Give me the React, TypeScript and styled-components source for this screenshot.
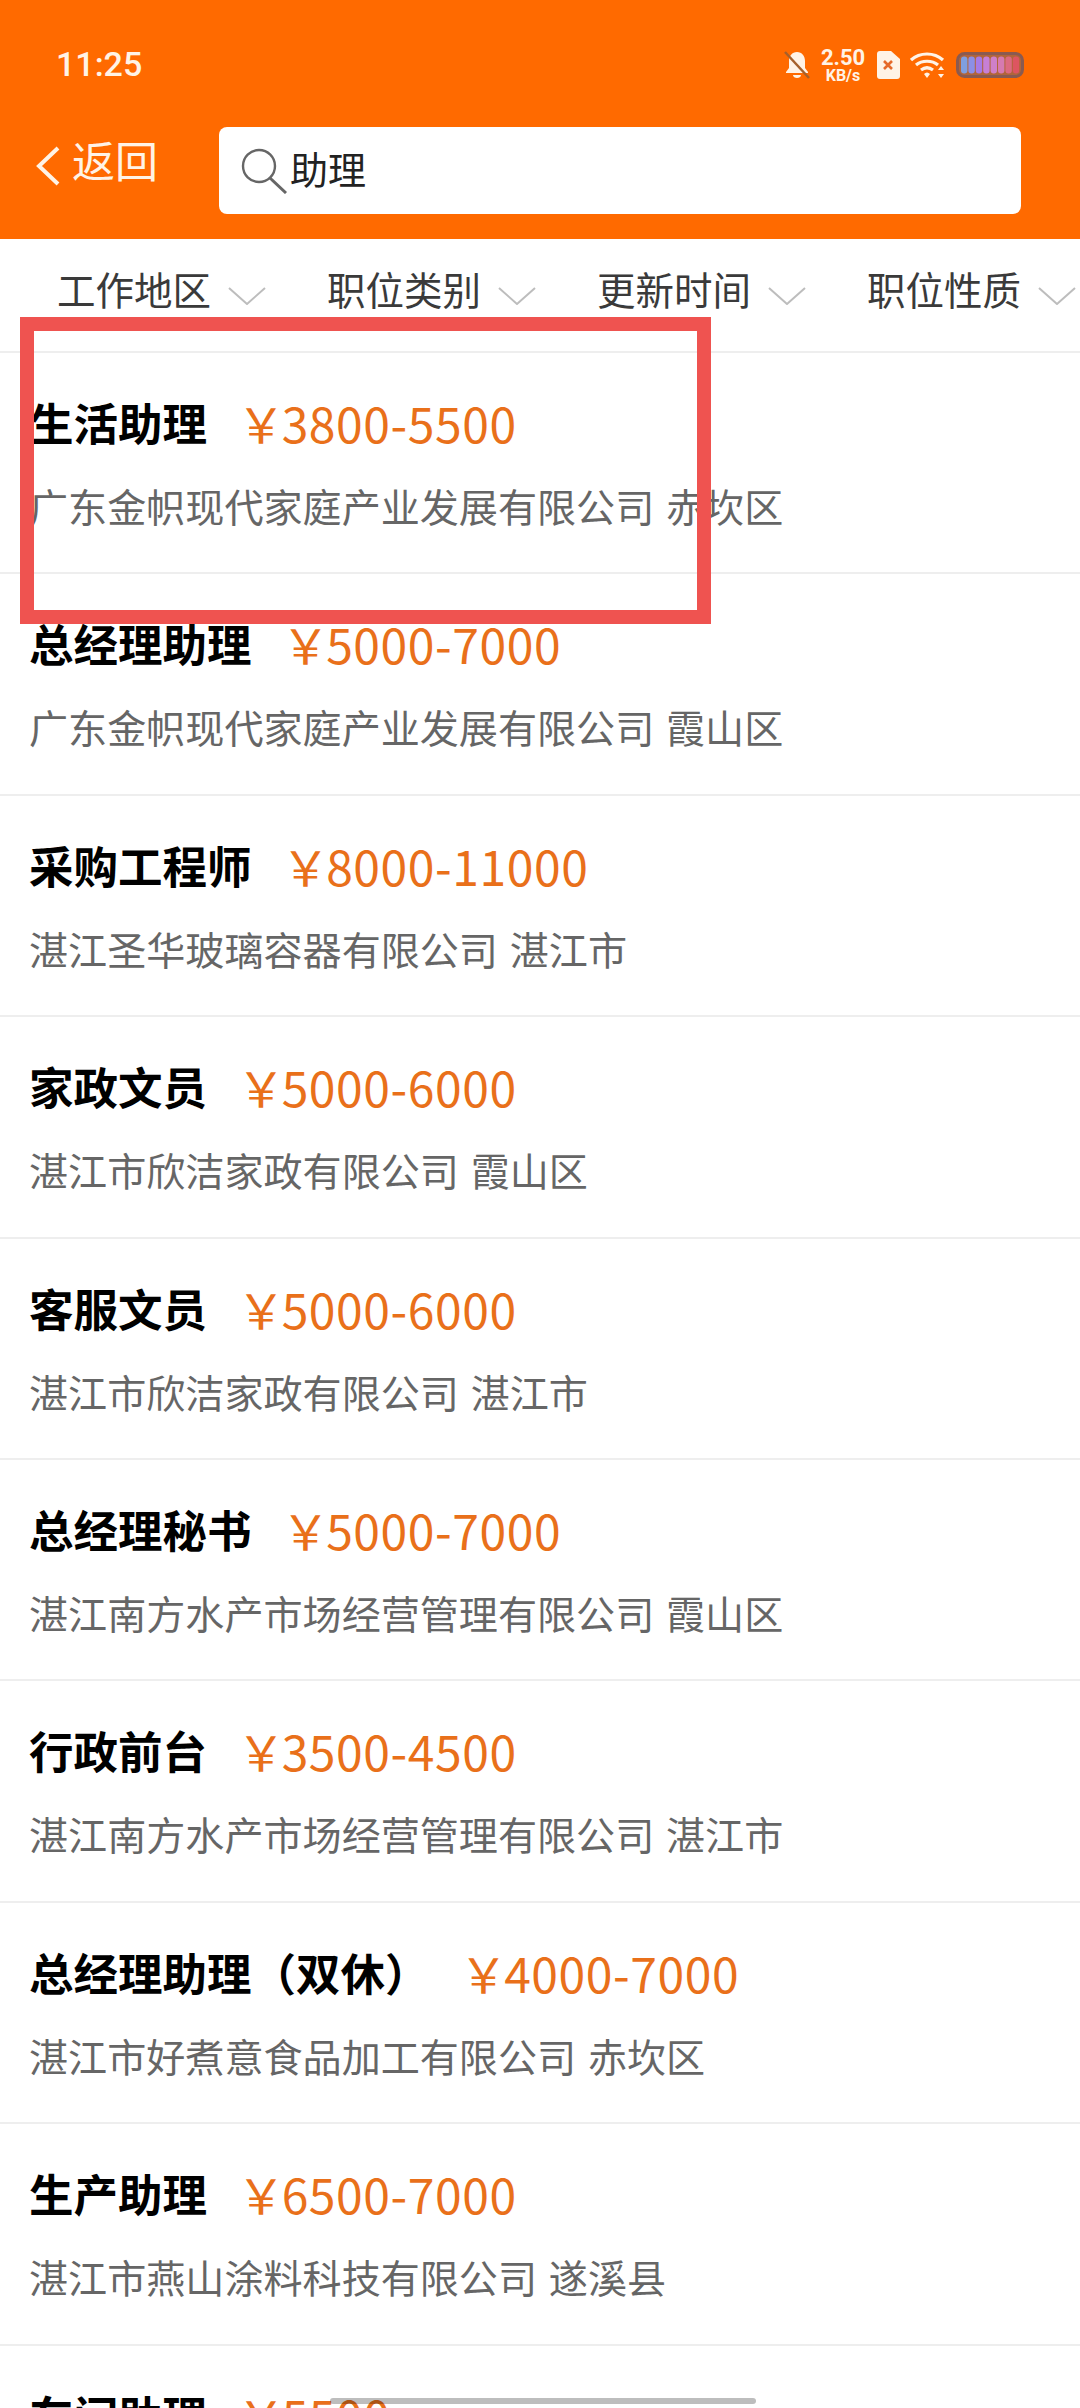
import React from 'react';
import styled, { createGlobalStyle } from 'styled-components';

const GlobalStyle = createGlobalStyle`
  html, body {
    margin: 0;
    padding: 0;
    background: #fff;
  }
  * {
    box-sizing: border-box;
  }
`;

const Page = styled.div`
  position: relative;
  width: 1080px;
  height: 2408px;
  overflow: hidden;
  background: #fff;
  font-family: 'Noto Sans CJK SC', 'Noto Sans', sans-serif;
`;

const Header = styled.header`
  height: 239px;
  background: #ff6a00;
  display: flex;
  flex-direction: column;
`;

const StatusBar = styled.div`
  height: 127px;
  padding: 44px 56px 0 56px;
  display: flex;
  justify-content: space-between;
  align-items: flex-start;
  color: #fff;
`;

const Clock = styled.div`
  font-family: Roboto, sans-serif;
  font-weight: 500;
  font-size: 34px;
  line-height: 40px;
  color: #fff3e6;
`;

const StatusIcons = styled.div`
  display: flex;
  align-items: center;
  gap: 10px;
  height: 36px;
  margin-top: 3px;
`;

const Speed = styled.div`
  display: flex;
  flex-direction: column;
  align-items: center;
  width: 46px;
  font-family: Roboto, sans-serif;
  font-weight: 700;
  color: #fff3e6;
`;

const SpeedValue = styled.span`
  font-size: 22px;
  line-height: 21px;
`;

const SpeedUnit = styled.span`
  font-size: 16px;
  line-height: 15px;
`;

const SearchRow = styled.div`
  display: flex;
  align-items: flex-start;
  padding-left: 36px;
`;

const BackButton = styled.div`
  display: flex;
  align-items: center;
  width: 183px;
  height: 60px;
  margin-top: 2px;
  gap: 12px;
  color: #fff3e6;
  font-size: 43px;
  line-height: 60px;
`;

const BackIcon = styled.svg`
  flex: none;
  margin-top: 14px;
`;

const SearchBox = styled.div`
  width: 802px;
  height: 87px;
  background: #fff;
  border-radius: 8px;
  display: flex;
  align-items: center;
  padding-left: 22px;
`;

const SearchText = styled.span`
  margin: -5px 0 0 1px;
  font-size: 38px;
  line-height: 44px;
  color: #222;
`;

const Filters = styled.div`
  height: 114px;
  border-bottom: 2px solid #eeeeee;
  display: flex;
  padding: 24px 0 0 57px;
  overflow: hidden;
`;

const Filter = styled.div`
  flex: 0 0 270px;
  display: flex;
  align-items: flex-start;
  gap: 17px;
  color: #3a3a3a;
  font-size: 38.5px;
  line-height: 50px;
`;

const Caret = styled.svg`
  flex: none;
  margin-top: 24px;
`;

const List = styled.div`
  display: flex;
  flex-direction: column;
`;

const Row = styled.div`
  height: 221.4px;
  flex: none;
  padding: 38px 0 0 29px;
  border-bottom: 2px solid #eeeeee;
`;

const TitleLine = styled.div`
  display: flex;
  align-items: center;
  height: 62px;
  white-space: nowrap;
`;

const Title = styled.span`
  font-size: 44.5px;
  font-weight: 700;
  line-height: 62px;
  color: #000;
`;

const Price = styled.span`
  margin-left: 30px;
  font-size: 48px;
  line-height: 62px;
  letter-spacing: 0.6px;
  color: #e9701a;
`;

const Yen = styled.span`
  margin-right: -4px;
`;

const Company = styled.div`
  margin-top: 27px;
  font-size: 39.1px;
  line-height: 50px;
  word-spacing: 3px;
  color: #666;
  white-space: nowrap;
`;

const Annotation = styled.div`
  position: absolute;
  left: 20px;
  top: 317px;
  width: 691px;
  height: 307px;
  border-style: solid;
  border-color: #ef5350;
  border-width: 14px;
`;

const Scrollbar = styled.div`
  position: absolute;
  left: 330px;
  top: 2398px;
  width: 426px;
  height: 6px;
  border-radius: 3px;
  background: rgba(0, 0, 0, 0.26);
`;

interface Job {
  title: string;
  salary: string;
  company: string;
  area: string;
}

const filters = ['工作地区', '职位类别', '更新时间', '职位性质'];

const jobs: Job[] = [
  { title: '生活助理', salary: '3800-5500', company: '广东金帜现代家庭产业发展有限公司', area: '赤坎区' },
  { title: '总经理助理', salary: '5000-7000', company: '广东金帜现代家庭产业发展有限公司', area: '霞山区' },
  { title: '采购工程师', salary: '8000-11000', company: '湛江圣华玻璃容器有限公司', area: '湛江市' },
  { title: '家政文员', salary: '5000-6000', company: '湛江市欣洁家政有限公司', area: '霞山区' },
  { title: '客服文员', salary: '5000-6000', company: '湛江市欣洁家政有限公司', area: '湛江市' },
  { title: '总经理秘书', salary: '5000-7000', company: '湛江南方水产市场经营管理有限公司', area: '霞山区' },
  { title: '行政前台', salary: '3500-4500', company: '湛江南方水产市场经营管理有限公司', area: '湛江市' },
  { title: '总经理助理（双休）', salary: '4000-7000', company: '湛江市好煮意食品加工有限公司', area: '赤坎区' },
  { title: '生产助理', salary: '6500-7000', company: '湛江市燕山涂料科技有限公司', area: '遂溪县' },
  { title: '车间助理', salary: '5500', company: '', area: '' },
];

const CaretIcon = () => (
  <Caret width="38" height="18" viewBox="0 0 38 18" fill="none">
    <path d="M1 1l18 16L37 1" stroke="#bdbdbd" strokeWidth="2" />
  </Caret>
);

const BellOff = () => (
  <svg width="26" height="28" viewBox="0 0 26 28">
    <path d="M13 1c-5 0-8 4-8 9v7l-3 4v1h22v-1l-3-4v-7c0-5-3-9-8-9z" fill="#fff3e6" />
    <path d="M9 24h8c0 2-2 3-4 3s-4-1-4-3z" fill="#fff3e6" />
    <path d="M1 1l24 26" stroke="#a5602c" strokeWidth="2.5" />
  </svg>
);

const SimIcon = () => (
  <svg width="24" height="28" viewBox="0 0 24 28">
    <path d="M4 0h11l9 8v17a3 3 0 0 1-3 3H4a3 3 0 0 1-3-3V3a3 3 0 0 1 3-3z" fill="#fff3e6" />
    <path d="M8 10l8 8M16 10l-8 8" stroke="#e5692a" strokeWidth="2.6" />
  </svg>
);

const WifiIcon = () => (
  <svg width="36" height="28" viewBox="0 0 36 28" fill="none">
    <path d="M1 9c9-8 23-8 32 0" stroke="#fff3e6" strokeWidth="3.2" />
    <path d="M6 14c6-5 16-5 22 0" stroke="#fff3e6" strokeWidth="3.2" />
    <path d="M11 19c4-3 8-3 12 0" stroke="#fff3e6" strokeWidth="3.2" />
    <path d="M14 23c2-2 4-2 6 0l-3 4z" fill="#fff3e6" />
    <path d="M31 15l3 4h-6zM31 27l-3-4h6z" fill="#fff3e6" />
  </svg>
);

const batteryCells = ['#7f9fe0', '#8c8fe6', '#a77be6', '#c77fd6', '#cf80c8', '#d67ab0', '#dc6a80', '#dd5560'];

const BatteryIcon = () => (
  <svg width="68" height="26" viewBox="0 0 68 26">
    <rect x="1.5" y="1.5" width="65" height="23" rx="7" fill="#b0653a" stroke="#8a5a50" strokeWidth="3" />
    {batteryCells.map((color, i) => (
      <rect key={color} x={5 + i * 7.4} y="4.5" width="6.4" height="17" rx="3" fill={color} />
    ))}
  </svg>
);

const App = () => (
  <Page>
    <GlobalStyle />
    <Header>
      <StatusBar>
        <Clock>11:25</Clock>
        <StatusIcons>
          <BellOff />
          <Speed>
            <SpeedValue>2.50</SpeedValue>
            <SpeedUnit>KB/s</SpeedUnit>
          </Speed>
          <SimIcon />
          <WifiIcon />
          <BatteryIcon />
        </StatusIcons>
      </StatusBar>
      <SearchRow>
        <BackButton>
          <BackIcon width="24" height="40" viewBox="0 0 24 40" fill="none">
            <path d="M22 2L3 20l19 18" stroke="#fff3e6" strokeWidth="4" />
          </BackIcon>
          返回
        </BackButton>
        <SearchBox>
          <svg width="48" height="46" viewBox="0 0 48 46" fill="none">
            <circle cx="18" cy="18" r="16" stroke="#666" strokeWidth="2.4" />
            <path d="M29 30l16 15" stroke="#666" strokeWidth="3" />
          </svg>
          <SearchText>助理</SearchText>
        </SearchBox>
      </SearchRow>
    </Header>
    <Filters>
      {filters.map((name) => (
        <Filter key={name}>
          {name}
          <CaretIcon />
        </Filter>
      ))}
    </Filters>
    <List>
      {jobs.map((job) => (
        <Row key={job.title}>
          <TitleLine>
            <Title>{job.title}</Title>
            <Price>
              <Yen>￥</Yen>
              {job.salary}
            </Price>
          </TitleLine>
          <Company>
            {job.company} {job.area}
          </Company>
        </Row>
      ))}
    </List>
    <Annotation />
    <Scrollbar />
  </Page>
);

export default App;
